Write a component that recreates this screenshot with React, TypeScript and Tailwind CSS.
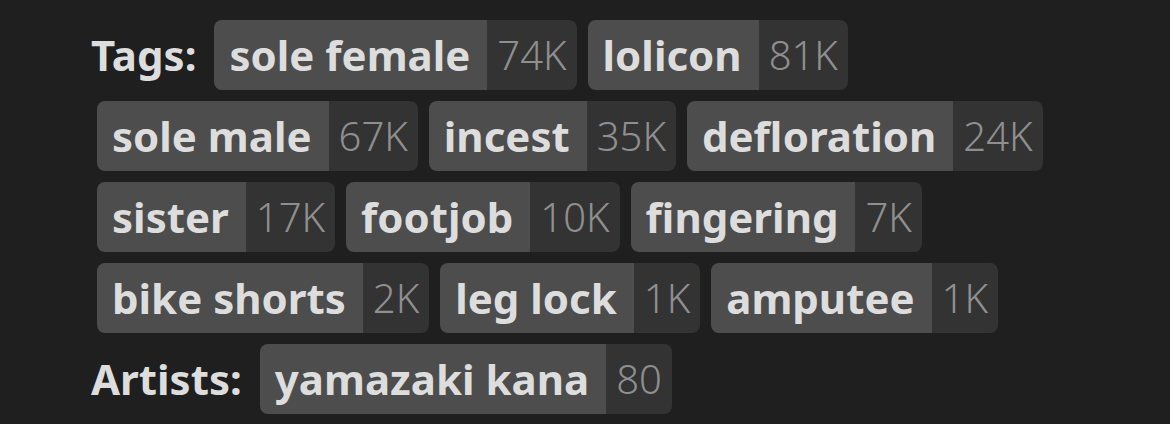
type Tag = { name: string; count: string }

const tags: Tag[] = [
  { name: 'sole female', count: '74K' },
  { name: 'lolicon', count: '81K' },
  { name: 'sole male', count: '67K' },
  { name: 'incest', count: '35K' },
  { name: 'defloration', count: '24K' },
  { name: 'sister', count: '17K' },
  { name: 'footjob', count: '10K' },
  { name: 'fingering', count: '7K' },
  { name: 'bike shorts', count: '2K' },
  { name: 'leg lock', count: '1K' },
  { name: 'amputee', count: '1K' },
]

const artists: Tag[] = [{ name: 'yamazaki kana', count: '80' }]

function TagChip({ name, count }: Tag) {
  return (
    <a className="flex h-[70px] overflow-hidden rounded-[8px] leading-none">
      <span className="flex items-center bg-[#4d4d4d] pl-[15px] pr-[17px] text-[42px] font-bold text-[#dddddd]">{name}</span>
      <span className="flex items-center bg-[#333333] px-[10px] text-[40px] font-light text-[#8f8f8f]">{count}</span>
    </a>
  )
}

function TagGroup({ label, items }: { label: string; items: Tag[] }) {
  return (
    <div className="flex flex-wrap gap-[11px]">
      <span className="-ml-[6px] mr-[7px] flex h-[70px] items-center text-[42px] font-bold leading-none text-[#dddddd]">
        {label}
      </span>
      {items.map((t) => (
        <TagChip key={t.name} {...t} />
      ))}
    </div>
  )
}

export default function App() {
  return (
    <div
      className="h-[424px] w-[1170px] bg-[#1f1f1f] pl-[97px] pt-[20px]"
      style={{ fontFamily: '"Noto Sans", "Open Sans", sans-serif' }}
    >
      <div className="flex w-[1010px] flex-col gap-[11px]">
        <TagGroup label="Tags:" items={tags} />
        <TagGroup label="Artists:" items={artists} />
      </div>
    </div>
  )
}
